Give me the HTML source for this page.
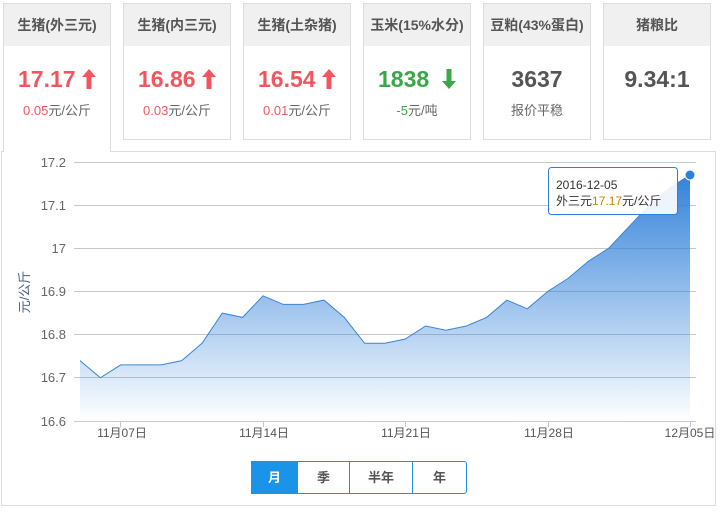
<!DOCTYPE html><html><head><meta charset="utf-8"><style>
body{margin:0;width:723px;height:513px;background:#fff;font-family:"Liberation Sans","Noto Sans CJK SC",sans-serif;position:relative;overflow:hidden}
.c{position:absolute;top:3px;width:108px;height:137px;border:1px solid #ddd;box-sizing:border-box;background:#fff;text-align:center}
.h{height:42px;background:#f0f0f0;line-height:42px;font-size:14px;font-weight:bold;color:#555}
.v{margin-top:20px;font-size:23px;font-weight:bold;line-height:26px}
.s{margin-top:8px;font-size:13px;color:#666}
.r{color:#f25560}.g{color:#3ba64a}.d{color:#555}
.ar{display:inline-block;vertical-align:top;margin-top:3px}
.panel{position:absolute;left:1px;top:151px;width:715px;height:355px;border:1px solid #ddd;box-sizing:border-box}
.btns{position:absolute;top:461px;left:251px;height:33px;display:flex;border:1px solid #1e90e6;box-sizing:border-box;border-radius:0 3px 3px 0}
.btns div{height:31px;line-height:31px;text-align:center;font-size:13px;font-weight:bold;color:#555;border-left:1px solid #1e90e6}
</style></head><body>
<div class="panel"></div>
<div class="c" style="left:3px;height:149px;border-bottom:none;z-index:2"><div class="h">生猪(外三元)</div><div class="v r">17.17 <svg class="ar" width="14" height="20" viewBox="0 0 14 20"><path d="M7 0L14 8H9.5V20H4.5V8H0Z" fill="#f25560"/></svg></div><div class="s"><span class="r">0.05</span>元/公斤</div></div>
<div class="c" style="left:123px"><div class="h">生猪(内三元)</div><div class="v r">16.86 <svg class="ar" width="14" height="20" viewBox="0 0 14 20"><path d="M7 0L14 8H9.5V20H4.5V8H0Z" fill="#f25560"/></svg></div><div class="s"><span class="r">0.03</span>元/公斤</div></div>
<div class="c" style="left:243px"><div class="h">生猪(土杂猪)</div><div class="v r">16.54 <svg class="ar" width="14" height="20" viewBox="0 0 14 20"><path d="M7 0L14 8H9.5V20H4.5V8H0Z" fill="#f25560"/></svg></div><div class="s"><span class="r">0.01</span>元/公斤</div></div>
<div class="c" style="left:363px"><div class="h">玉米(15%水分)</div><div class="v g">1838 &nbsp;<svg class="ar" width="14" height="20" viewBox="0 0 14 20"><path d="M7 20L14 12H9.5V0H4.5V12H0Z" fill="#3ba64a"/></svg></div><div class="s"><span class="g">-5</span>元/吨</div></div>
<div class="c" style="left:483px"><div class="h">豆粕(43%蛋白)</div><div class="v d">3637</div><div class="s">报价平稳</div></div>
<div class="c" style="left:603px"><div class="h">猪粮比</div><div class="v d">9.34:1</div></div>
<svg style="position:absolute;left:0;top:0" width="723" height="513">
<defs><linearGradient id="gr2" gradientUnits="userSpaceOnUse" x1="0" y1="170" x2="0" y2="421"><stop offset="0" stop-color="#2f7fd9" stop-opacity="1"/><stop offset="1" stop-color="#2f7fd9" stop-opacity="0"/></linearGradient></defs>
<g stroke="#c8c8c8" stroke-width="1">
<line x1="74" y1="162.5" x2="696" y2="162.5"/><line x1="74" y1="205.5" x2="696" y2="205.5"/><line x1="74" y1="248.5" x2="696" y2="248.5"/><line x1="74" y1="291.5" x2="696" y2="291.5"/><line x1="74" y1="334.5" x2="696" y2="334.5"/><line x1="74" y1="377.5" x2="696" y2="377.5"/></g>
<polygon fill="url(#gr2)" points="80,360.6 100.3,377.8 120.7,364.9 141,364.9 161.3,364.9 181.7,360.6 202,343.3 222.3,313.1 242.6,317.4 263,295.8 283.3,304.4 303.6,304.4 324,300.1 344.3,317.4 364.6,343.3 385,343.3 405.3,339 425.6,326 445.9,330.3 466.3,326 486.6,317.4 506.9,300.1 527.3,308.8 547.6,291.5 567.9,278.5 588.3,261.3 608.6,248.3 628.9,226.7 649.2,205.2 669.6,187.9 690,174.9 690,421 80,421"/>
<polyline fill="none" stroke="#3a86d8" stroke-width="1" points="80,360.6 100.3,377.8 120.7,364.9 141,364.9 161.3,364.9 181.7,360.6 202,343.3 222.3,313.1 242.6,317.4 263,295.8 283.3,304.4 303.6,304.4 324,300.1 344.3,317.4 364.6,343.3 385,343.3 405.3,339 425.6,326 445.9,330.3 466.3,326 486.6,317.4 506.9,300.1 527.3,308.8 547.6,291.5 567.9,278.5 588.3,261.3 608.6,248.3 628.9,226.7 649.2,205.2 669.6,187.9 690,174.9"/>
<line x1="74" y1="421.5" x2="696" y2="421.5" stroke="#c0cad8"/>
<g stroke="#c0cad8"><line x1="120.5" y1="421" x2="120.5" y2="427"/><line x1="263.5" y1="421" x2="263.5" y2="427"/><line x1="405.5" y1="421" x2="405.5" y2="427"/><line x1="548.5" y1="421" x2="548.5" y2="427"/><line x1="690.5" y1="421" x2="690.5" y2="427"/></g>
<circle cx="690" cy="175" r="5" fill="#2f7fd9" stroke="#fff" stroke-width="1"/>
<g font-size="13" fill="#666" text-anchor="end" font-family="Liberation Sans,sans-serif"><text x="66" y="167">17.2</text><text x="66" y="210">17.1</text><text x="66" y="253">17</text><text x="66" y="296">16.9</text><text x="66" y="339">16.8</text><text x="66" y="382">16.7</text><text x="66" y="426">16.6</text></g>
<g font-size="12" fill="#555" text-anchor="middle"><text x="122" y="437">11月07日</text><text x="264" y="437">11月14日</text><text x="406" y="437">11月21日</text><text x="549" y="437">11月28日</text><text x="690" y="437">12月05日</text></g>
<text transform="translate(29,292) rotate(-90)" font-size="13" fill="#4a5f85" text-anchor="middle">元/公斤</text>
<rect x="548.5" y="167.5" width="129" height="47" rx="3" fill="#fff" fill-opacity="0.9" stroke="#2f7fd9"/>
<text x="556" y="189" font-size="12" fill="#333">2016-12-05</text>
<text x="556" y="205" font-size="12" fill="#333">外三元<tspan fill="#c8840a">17.17</tspan>元/公斤</text>
</svg>
<div class="btns"><div style="width:47px;background:#1a94e8;color:#fff;border:none;height:33px;line-height:33px;margin-top:-1px;margin-left:-1px">月</div><div style="width:51px;border-left:none">季</div><div style="width:62px">半年</div><div style="width:53px">年</div></div>
</body></html>
